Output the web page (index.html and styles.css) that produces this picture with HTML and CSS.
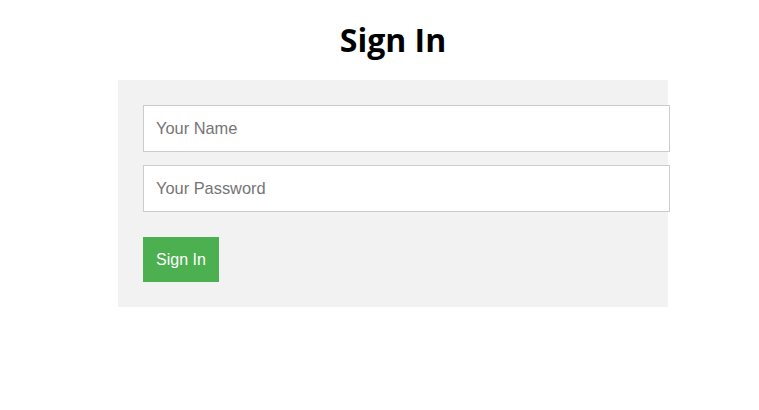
FILE: index.html
```html
<html>
<head>
<meta charset="utf-8">
<title>Sign In</title>
<link rel="stylesheet" href="styles.css">
</head>
<body>
<div class="page">
  <h1 class="title">Sign In</h1>
  <div class="login_box">
    <input type="text" class="login_field" name="name" placeholder="Your Name">
    <input type="password" class="login_field" name="password" placeholder="Your Password">
    <button class="login_btn">Sign In</button>
  </div>
</div>
</body>
</html>
```
FILE: styles.css
```css
body{
  margin: 0;
  background-color: white;
}

.page{
  width: 550px;
  margin-left: 118px;
}

.title{
  margin: 0 0 20px 0;
  padding-top: 20px;
  line-height: 40px;
  font-size: 32px;
  font-weight: bold;
  text-align: center;
  color: black;
  font-family: 'Open Sans', sans-serif;
}

.login_box{
  background-color: #f2f2f2;
  padding: 25px;
  display: flex;
  flex-direction: column;
  align-items: flex-start;
}

.login_field{
  box-sizing: border-box;
  width: 527px;
  height: 47px;
  padding: 0 12px;
  margin-bottom: 13px;
  border: 1px solid #ccc;
  font-size: 16.4px;
  font-family: 'Liberation Sans', Arial, sans-serif;
  color: #333;
  background: white;
  outline: none;
}

.login_field:last-of-type{
  margin-bottom: 25px;
}

.login_field::placeholder{
  color: #757575;
}

.login_btn{
  box-sizing: border-box;
  height: 45px;
  padding: 0 13px;
  border: none;
  background-color: #4CAF50;
  color: white;
  font-size: 16px;
  font-family: 'Liberation Sans', Arial, sans-serif;
}
```
